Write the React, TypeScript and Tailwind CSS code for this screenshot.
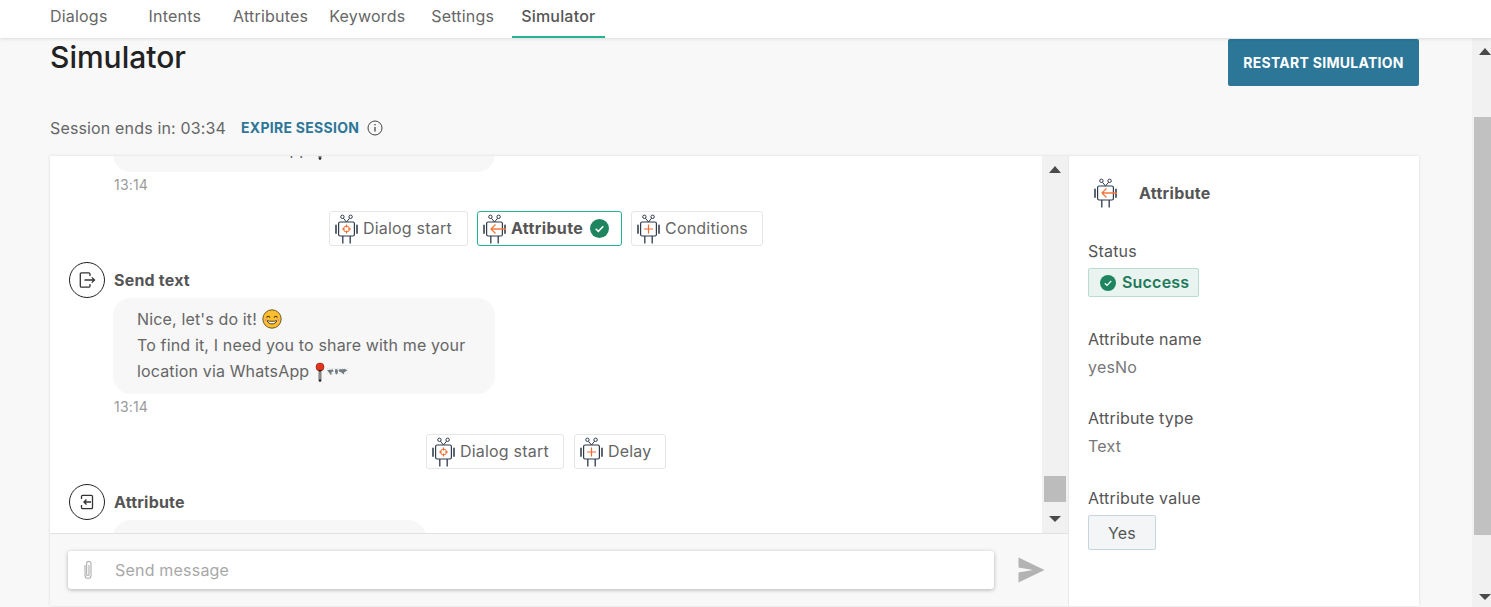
import React from "react";

const Robot = ({ kind, className = "" }: { kind: "target" | "arrow" | "plus"; className?: string }) => (
  <svg viewBox="0 0 26 30" width="26" height="30" fill="none" className={`shrink-0 ${className}`}>
    <circle cx="9.4" cy="2.8" r="1.7" stroke="#2f3b4c" strokeWidth="1" />
    <circle cx="17.6" cy="2.8" r="1.7" stroke="#2f3b4c" strokeWidth="1" />
    <path d="M10.4 4.2L13.5 8L16.6 4.2" stroke="#2f3b4c" strokeWidth="1" />
    <rect x="5.6" y="8" width="15.8" height="14" rx="1.5" fill="#fff" stroke="#2f3b4c" strokeWidth="1.2" />
    <path d="M3 11.5V19M24 11.5V19" stroke="#5d6673" strokeWidth="2" strokeLinecap="round" />
    <path d="M9.8 22V29.5M17.2 22V29.5" stroke="#2f3b4c" strokeWidth="1.3" />
    {kind === "target" && (
      <g stroke="#f26b2a" strokeWidth="1">
        <circle cx="13.5" cy="15" r="3" />
        <path d="M13.5 10.5V13.5M13.5 16.5V19.5M9 15H12M15 15H18" />
      </g>
    )}
    {kind === "plus" && <path d="M13.5 10.5V19.5M9 15H18" stroke="#f26b2a" strokeWidth="1.2" />}
    {kind === "arrow" && <path d="M25 15H10M14.5 10.5L10 15L14.5 19.5" stroke="#f4793b" strokeWidth="1.3" />}
  </svg>
);

const Check = ({ size = 18 }: { size?: number }) => (
  <svg viewBox="0 0 18 18" width={size} height={size} className="shrink-0">
    <circle cx="9" cy="9" r="9" fill="#1f8561" />
    <path d="M5.4 9.3L7.9 11.7L12.6 6.8" fill="none" stroke="#fff" strokeWidth="1.4" />
  </svg>
);

const Smile = () => (
  <svg viewBox="0 0 20 20" width="20" height="20" className="inline-block align-[-4px]">
    <circle cx="10" cy="10" r="9.2" fill="#fbbf2e" stroke="#4a3a16" strokeWidth="0.8" />
    <path d="M4.5 8.5C5.5 6.8 7 6.8 8 8.5M12 8.5C13 6.8 14.5 6.8 15.5 8.5" fill="none" stroke="#3c2c10" strokeWidth="1.1" />
    <path d="M5 11.5C6.5 16 13.5 16 15 11.5C12 12.6 8 12.6 5 11.5Z" fill="#fff" stroke="#3c2c10" strokeWidth="0.9" />
    <circle cx="4" cy="11" r="1.5" fill="#f6a07a" />
    <circle cx="16" cy="11" r="1.5" fill="#f6a07a" />
  </svg>
);

const Pin = () => (
  <svg viewBox="0 0 34 20" width="34" height="20" className="inline-block align-[-5px]">
    <circle cx="6" cy="5" r="4" fill="#e8341c" stroke="#7a1a10" strokeWidth="0.6" />
    <path d="M6 9V18.5" stroke="#222" strokeWidth="2.6" strokeLinecap="round" />
    <path d="M6 9.5V17.5" stroke="#eee" strokeWidth="1" />
    <path d="M13 8L19 7.5L19.5 9.5L17.5 10L17.5 12.5L16.5 13L15 10.5ZM21 7.5L23 7L24 9L23.5 12L22 12.5L21 10ZM24.5 7.5L31 7L33.5 8.5L30.5 10L29.5 12.5L27.5 10.5L25 9.5Z" fill="#6f7b80" />
    <path d="M13 6.5H34M13 11.5H34" stroke="#c4cacd" strokeWidth="0.6" strokeDasharray="1 1.5" />
  </svg>
);

const Chip = ({ kind, label, active, check, width }: { kind: "target" | "arrow" | "plus"; label: string; active?: boolean; check?: boolean; width: string }) => (
  <div
    className={`flex h-[35px] items-center rounded-[3px] border pl-[3px] ${width} ${
      active ? "border-[#25b393]" : "border-[#e6e6e6]"
    }`}
  >
    <Robot kind={kind} />
    <span className={`ml-[4px] pb-[2px] text-base ${active ? "font-bold tracking-[0.35px] text-[#555555]" : "tracking-[0.2px] text-[#666666]"}`}>{label}</span>
    {check && <span className="ml-[7px]"><Check size={19} /></span>}
  </div>
);

const Circle = ({ dir }: { dir: "out" | "in" }) => (
  <div className="flex h-[36px] w-[36px] shrink-0 items-center justify-center rounded-full border border-[#222222]">
    <svg viewBox="0 0 18 18" width="18" height="18" fill="none" stroke="#333333" strokeWidth="1.3">
      {dir === "out" ? (
        <>
          <path d="M12 5V3A1.2 1.2 0 0 0 10.8 1.8H3.5A1.2 1.2 0 0 0 2.3 3V15A1.2 1.2 0 0 0 3.5 16.2H10.8A1.2 1.2 0 0 0 12 15V13" />
          <path d="M6.5 9H16.5M13.8 6.4L16.5 9L13.8 11.6" />
        </>
      ) : (
        <>
          <path d="M3.5 6V3.5A1.2 1.2 0 0 1 4.7 2.3H13.3A1.2 1.2 0 0 1 14.5 3.5V14.5A1.2 1.2 0 0 1 13.3 15.7H4.7A1.2 1.2 0 0 1 3.5 14.5V12" />
          <path d="M13 9H6M8.5 6.5L6 9L8.5 11.5" />
        </>
      )}
    </svg>
  </div>
);

const Up = ({ className = "" }: { className?: string }) => (
  <div className={`h-0 w-0 border-x-[6px] border-b-[7px] border-x-transparent border-b-[#4a4a4a] ${className}`} />
);
const Down = ({ className = "" }: { className?: string }) => (
  <div className={`h-0 w-0 border-x-[6px] border-t-[6px] border-x-transparent border-t-[#4a4a4a] ${className}`} />
);

const Field = ({ label, value, mt }: { label: string; value: string; mt: string }) => (
  <div className={mt}>
    <div className="text-base leading-[24px] text-[#555555]">{label}</div>
    <div className="mt-[4px] text-base leading-[24px] text-[#777777]">{value}</div>
  </div>
);

export default function App() {
  return (
    <div className="flex h-[607px] w-[1491px] flex-col overflow-hidden bg-[#f8f8f8] font-['Inter',sans-serif] tracking-[0.2px]">
      <header className="z-10 flex h-[38px] shrink-0 items-stretch bg-white pl-[50px] text-base text-[#666666] shadow-[0_1px_3px_rgba(0,0,0,0.12)]">
        <span className="pt-[4px]">Dialogs</span>
        <span className="ml-[41px] pt-[4px]">Intents</span>
        <span className="ml-[32px] pt-[4px]">Attributes</span>
        <span className="ml-[21px] pt-[4px]">Keywords</span>
        <span className="ml-[26px] pt-[4px]">Settings</span>
        <span className="ml-[18px] w-[93px] border-b-2 border-[#25b393] pl-[9px] pt-[4px] font-medium text-[#555555]">Simulator</span>
      </header>

      <div className="flex min-h-0 flex-1">
        <main className="flex min-w-0 flex-1 flex-col pl-[50px] pr-[53px] pt-px">
          <div className="flex h-[47px] shrink-0 items-start justify-between">
            <h1 className="text-[30px] font-medium leading-[37px] tracking-normal text-[#222222]">Simulator</h1>
            <button className="h-[47px] w-[191px] rounded-[2px] bg-[#2c7697] text-sm font-bold tracking-[0.28px] text-white">RESTART SIMULATION</button>
          </div>

          <div className="mt-[27px] flex h-[28px] shrink-0 items-center text-base tracking-[0.15px] text-[#666666]">
            <span className="pt-px">Session ends in: 03:34</span>
            <span className="ml-[15px] pt-px text-sm font-bold tracking-[0.28px] text-[#2c7697]">EXPIRE SESSION</span>
            <svg viewBox="0 0 16 16" width="16" height="16" fill="none" stroke="#444444" strokeWidth="1" className="ml-[8px] mt-px">
              <circle cx="8" cy="8" r="7" />
              <path d="M8 7V11.5" strokeWidth="1.3" />
              <circle cx="8" cy="4.8" r="0.8" fill="#444444" stroke="none" />
            </svg>
          </div>

          <section className="mb-px mt-[15px] flex min-h-0 flex-1 bg-white shadow-[0_0_3px_rgba(0,0,0,0.12)]">
            <div className="flex w-[1019px] shrink-0 flex-col border-r border-[#e8e8e8]">
              <div className="flex min-h-0 flex-1">
                <div className="min-w-0 flex-1 overflow-hidden">
                  <div className="ml-[63px] mt-[-20px] w-[382px] rounded-b-[18px] bg-[#f7f7f7] px-[24px] pb-[10px] text-base leading-[26px] tracking-[0.15px] text-[#666666]">
                    <div>location via WhatsApp <Pin /></div>
                  </div>
                  <div className="ml-[64px] mt-[3px] h-[20px] text-sm leading-[20px] text-[#9a9a9a]">13:14</div>
                  <div className="mt-[16px] flex justify-center gap-[9px]">
                    <Chip kind="target" label="Dialog start" width="w-[139px]" />
                    <Chip kind="arrow" label="Attribute" active check width="w-[145px]" />
                    <Chip kind="plus" label="Conditions" width="w-[132px]" />
                  </div>
                  <div className="ml-[19px] mt-[16px] flex items-center gap-[9px]">
                    <Circle dir="out" />
                    <span className="text-base font-bold text-[#555555]">Send text</span>
                  </div>
                  <div className="ml-[63px] w-[382px] rounded-[18px] bg-[#f7f7f7] px-[24px] pb-[10px] pt-[8px] text-base leading-[26px] tracking-[0.15px] text-[#666666]">
                    <div>Nice, let's do it! <Smile /></div>
                    <div>To find it, I need you to share with me your</div>
                    <div>location via WhatsApp <Pin /></div>
                  </div>
                  <div className="ml-[64px] mt-[3px] h-[20px] text-sm leading-[20px] text-[#9a9a9a]">13:14</div>
                  <div className="mt-[17px] flex justify-center gap-[10px]">
                    <Chip kind="target" label="Dialog start" width="w-[138px]" />
                    <Chip kind="plus" label="Delay" width="w-[92px]" />
                  </div>
                  <div className="ml-[19px] mt-[15px] flex items-center gap-[9px]">
                    <Circle dir="in" />
                    <span className="text-base font-bold text-[#555555]">Attribute</span>
                  </div>
                  <div className="ml-[63px] h-[40px] w-[313px] rounded-[18px] bg-[#f7f7f7]" />
                </div>
                <div className="flex w-[26px] shrink-0 flex-col items-center bg-[#f1f1f1] pt-[10px]">
                  <Up />
                  <div className="mt-[303px] h-[26px] w-[22px] bg-[#bcbcbc]" />
                  <Down className="mt-[14px]" />
                </div>
              </div>
              <div className="flex h-[73px] shrink-0 items-center border-t border-[#e2e2e2] bg-[#f8f8f8] pl-[18px]">
                <div className="flex h-[38px] w-[926px] items-center rounded-[3px] bg-white pl-[12px] shadow-[0_1px_4px_rgba(0,0,0,0.28)]">
                  <svg viewBox="0 0 16 22" width="16" height="22" fill="none" stroke="#b5b5b5" strokeWidth="1.2">
                    <path d="M5 6V16.5A3 3 0 0 0 11 16.5V4.5A2.2 2.2 0 0 0 6.6 4.5V15.5A1.2 1.2 0 0 0 9 15.5V6" />
                  </svg>
                  <span className="ml-[19px] text-base text-[#a8a8a8]">Send message</span>
                </div>
                <svg viewBox="0 0 27 26" width="27" height="26" className="ml-[24px]">
                  <path d="M0.5 0.5L26.5 13L0.5 25.5V15.5L15 13L0.5 10.5Z" fill="#b3b3b3" />
                </svg>
              </div>
            </div>

            <aside className="min-w-0 flex-1 pl-[19px] pt-[22px]">
              <div className="flex h-[30px] items-center">
                <Robot kind="arrow" className="ml-[4px]" />
                <span className="ml-[21px] text-base font-bold tracking-[0.3px] text-[#555555]">Attribute</span>
              </div>
              <div className="mt-[31px] text-base leading-[24px] text-[#555555]">Status</div>
              <div className="mt-[5px] flex h-[29px] w-[111px] items-center rounded-[2px] border border-[#b9dccf] bg-[#e9f4f0] pl-[11px] text-base font-semibold text-[#1f7a5a]">
                <Check size={16} />
                <span className="ml-[6px] pb-[2px]">Success</span>
              </div>
              <Field label="Attribute name" value="yesNo" mt="mt-[30px]" />
              <Field label="Attribute type" value="Text" mt="mt-[27px]" />
              <div className="mt-[28px] text-base leading-[24px] text-[#555555]">Attribute value</div>
              <div className="mt-[5px] flex h-[35px] w-[68px] items-center justify-center rounded-[2px] border border-[#c6d6de] bg-[#f3f5f6] text-base text-[#555555]">Yes</div>
            </aside>
          </section>
        </main>

        <div className="flex w-[19px] shrink-0 flex-col bg-[#f1f1f1] pt-[10px]">
          <Up className="ml-[7px]" />
          <div className="ml-[2px] mt-[62px] h-[418px] flex-none bg-[#c1c1c1]" />
          <Down className="ml-[7px] mt-[59px]" />
        </div>
      </div>
    </div>
  );
}
